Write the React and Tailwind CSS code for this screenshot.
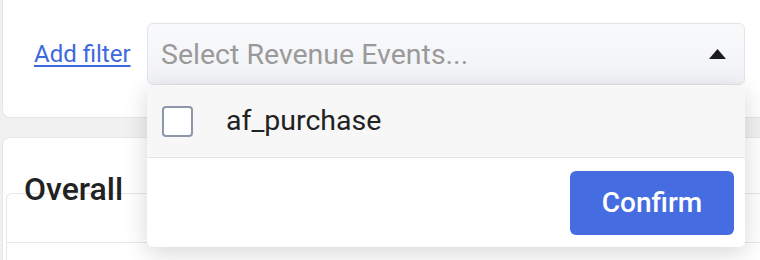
export default function App() {
  return (
    <div className="w-[760px] h-[260px] overflow-hidden bg-[#f1f1f1] font-['Roboto',sans-serif] relative">
      {/* Filter card */}
      <div className="ml-[2px] mr-[-10px] h-[118px] bg-white border border-t-0 border-[#e6e6e6] rounded-b-lg flex items-start pt-[23px]">
        <div className="flex items-center h-[62px] pl-[31px]">
          <a href="#" className="text-[24px] text-[#3d68de] underline underline-offset-[3px]">Add filter</a>
        </div>
        <div className="relative ml-auto mr-[24px]">
          <div className="w-[598px] h-[62px] rounded-md border border-[#e3e4e8] bg-gradient-to-b from-[#f9fafc] to-[#f1f2f5] flex items-center justify-between pl-[13px] pr-[18px]">
            <span className="text-[28.5px] text-[#9a9a9a] leading-none pt-[2px]">Select Revenue Events...</span>
            <svg width="17" height="10" viewBox="0 0 17 10">
              <path d="M8.5 0 L17 10 L0 10 Z" fill="#1c1c1c" />
            </svg>
          </div>
          {/* Dropdown panel */}
          <div className="absolute left-0 top-[62px] w-[598px] bg-white rounded-b-md shadow-[0_6px_24px_rgba(0,0,0,0.16)] z-10">
            <div className="h-[73px] bg-[#f7f7f7] border-b border-[#e5e5e5] flex items-center pl-[15px]">
              <div className="w-[31px] h-[31px] rounded-[4px] border-2 border-[#8d96ab] bg-white" />
              <span className="ml-[33px] text-[28.5px] text-[#222]">af_purchase</span>
            </div>
            <div className="h-[89px] flex items-center justify-end pr-[11px]">
              <button className="w-[164px] h-[64px] rounded-md bg-[#456de1] text-white text-[28px] font-medium">Confirm</button>
            </div>
          </div>
        </div>
      </div>

      {/* Overall card */}
      <div className="ml-[2px] mr-[-10px] mt-[19px] bg-white border border-[#e6e6e6] rounded-t-lg h-[140px]">
        <div className="pl-[21px] pt-[33px] h-[55px]">
          <h2 className="text-[32px] font-medium text-[#222] leading-[36px]">Overall</h2>
        </div>
        <div className="ml-[3px] border-l border-t border-[#e6e6e6] rounded-tl-md h-[100px]">
          <div className="h-[49px] border-b border-[#e6e6e6]" />
        </div>
      </div>
    </div>
  )
}
